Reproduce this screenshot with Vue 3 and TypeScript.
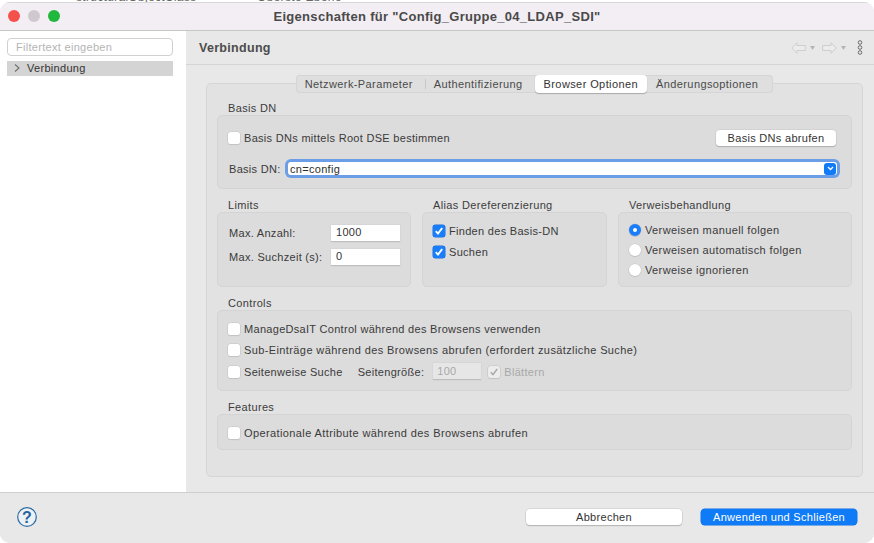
<script setup lang="ts">
import { ref } from 'vue'

const tabs = ['Netzwerk-Parameter', 'Authentifizierung', 'Browser Optionen', 'Änderungsoptionen']
const activeTab = ref('Browser Optionen')

const referrals = ['Verweisen manuell folgen', 'Verweisen automatisch folgen', 'Verweise ignorieren']
const referral = ref(referrals[0])
</script>

<template>
  <div class="screen">
    <div class="behind"><span class="behind-a">structuralObjectClass</span><span class="behind-b">Oberste Ebene</span></div>
    <div class="window">
      <header class="titlebar">
        <div class="lights">
          <span class="light red"></span>
          <span class="light grey"></span>
          <span class="light green"></span>
        </div>
        <div class="title">Eigenschaften für "Config_Gruppe_04_LDAP_SDI"</div>
      </header>

      <div class="main">
        <aside class="sidebar">
          <input class="filter" placeholder="Filtertext eingeben" />
          <div class="tree-row">
            <svg class="chevron" width="8" height="10" viewBox="0 0 8 10"><path d="M2 1.5 L6 5 L2 8.5" fill="none" stroke="#6f6f6f" stroke-width="1.1" /></svg>
            <span>Verbindung</span>
          </div>
        </aside>

        <section class="content">
          <div class="content-head">
            <h1>Verbindung</h1>
            <div class="nav">
              <svg width="15" height="12" viewBox="0 0 15 12"><path d="M6 0.700 L0.800 6 L6 11.300 V8.500 H14.300 V3.500 H6 Z" fill="#ececec" stroke="#cdcdcd" /></svg>
              <svg width="5" height="4" viewBox="0 0 5 4" class="caret"><path d="M0 0 H5 L2.500 4 Z" fill="#b5b5b5" /></svg>
              <svg width="15" height="12" viewBox="0 0 15 12" class="next"><path d="M9 0.700 L14.200 6 L9 11.300 V8.500 H0.700 V3.500 H9 Z" fill="#ececec" stroke="#cdcdcd" /></svg>
              <svg width="5" height="4" viewBox="0 0 5 4" class="caret"><path d="M0 0 H5 L2.500 4 Z" fill="#b5b5b5" /></svg>
              <svg width="6" height="15" viewBox="0 0 6 15" class="more">
                <circle cx="3" cy="2.500" r="1.800" fill="none" stroke="#6a6a6a" />
                <circle cx="3" cy="7.500" r="1.800" fill="none" stroke="#6a6a6a" />
                <circle cx="3" cy="12.500" r="1.800" fill="none" stroke="#6a6a6a" />
              </svg>
            </div>
          </div>

          <div class="tab-area">
            <div class="tabs">
              <div
                v-for="(tab, i) in tabs"
                :key="tab"
                :class="['tab', { active: activeTab === tab, sep: i === 0 }]"
              >{{ tab }}</div>
            </div>

            <div class="folder">
              <div class="group-label first">Basis DN</div>
              <div class="panel basis">
                <div class="row between">
                  <label class="check"><span class="box"></span>Basis DNs mittels Root DSE bestimmen</label>
                  <button class="btn fetch">Basis DNs abrufen</button>
                </div>
                <div class="row dn-row">
                  <span class="dn-label">Basis DN:</span>
                  <div class="combo">
                    <span>cn=config</span>
                    <span class="combo-btn">
                      <svg width="7" height="5" viewBox="0 0 7 5"><path d="M1 1 L3.500 3.500 L6 1" fill="none" stroke="#fff" stroke-width="1.400" /></svg>
                    </span>
                  </div>
                </div>
              </div>

              <div class="columns">
                <div class="col limits">
                  <div class="group-label">Limits</div>
                  <div class="panel tall">
                    <div class="field">
                      <span>Max. Anzahl:</span>
                      <div class="num">1000</div>
                    </div>
                    <div class="field">
                      <span>Max. Suchzeit (s):</span>
                      <div class="num">0</div>
                    </div>
                  </div>
                </div>
                <div class="col alias">
                  <div class="group-label">Alias Dereferenzierung</div>
                  <div class="panel tall">
                    <label class="check line">
                      <span class="box on"><svg width="10" height="10" viewBox="0 0 10 10"><path d="M1.800 5.200 L4 7.600 L8.200 2" fill="none" stroke="#fff" stroke-width="1.900" /></svg></span>Finden des Basis-DN
                    </label>
                    <label class="check line">
                      <span class="box on"><svg width="10" height="10" viewBox="0 0 10 10"><path d="M1.800 5.200 L4 7.600 L8.200 2" fill="none" stroke="#fff" stroke-width="1.900" /></svg></span>Suchen
                    </label>
                  </div>
                </div>
                <div class="col refs">
                  <div class="group-label">Verweisbehandlung</div>
                  <div class="panel tall radios">
                    <label v-for="r in referrals" :key="r" class="check radio-line">
                      <span :class="['radio', { on: referral === r }]"></span>{{ r }}
                    </label>
                  </div>
                </div>
              </div>

              <div class="group-label">Controls</div>
              <div class="panel controls">
                <label class="check line"><span class="box"></span>ManageDsaIT Control während des Browsens verwenden</label>
                <label class="check line wide"><span class="box"></span>Sub-Einträge während des Browsens abrufen (erfordert zusätzliche Suche)</label>
                <div class="paging">
                  <label class="check"><span class="box"></span>Seitenweise Suche</label>
                  <span class="page-size">Seitengröße:</span>
                  <div class="num disabled">100</div>
                  <label class="check muted">
                    <span class="box dim"><svg width="10" height="10" viewBox="0 0 10 10"><path d="M1.800 5.200 L4 7.600 L8.200 2" fill="none" stroke="#a9a9a9" stroke-width="1.500" /></svg></span>Blättern
                  </label>
                </div>
              </div>

              <div class="group-label">Features</div>
              <div class="panel features">
                <label class="check wide"><span class="box"></span>Operationale Attribute während des Browsens abrufen</label>
              </div>
            </div>
          </div>
        </section>
      </div>

      <footer class="footer">
        <svg class="help" width="20" height="20" viewBox="0 0 20 20">
          <circle cx="10" cy="10" r="9.300" fill="#eaf2f8" stroke="#2f6a9f" stroke-width="1.200" />
          <text x="10" y="15.500" text-anchor="middle" class="help-q">?</text>
        </svg>
        <div class="actions">
          <button class="btn cancel">Abbrechen</button>
          <button class="btn primary">Anwenden und Schließen</button>
        </div>
      </footer>
    </div>
  </div>
</template>

<style>
html, body {
  margin: 0;
  background: #fff;
}
</style>

<style scoped>
.screen {
  width: 874px;
  height: 543px;
  overflow: hidden;
  background: #fff;
  font-family: "Liberation Sans", Arial, sans-serif;
  font-size: 11px;
  letter-spacing: 0.3px;
  color: #3a3a3a;
  display: flex;
  flex-direction: column;
}
.behind {
  height: 2px;
  flex: none;
  overflow: hidden;
  position: relative;
  font-size: 12px;
  color: #666;
}
.behind-a {
  position: absolute;
  left: 76px;
  top: -10px;
}
.behind-b {
  position: absolute;
  left: 257px;
  top: -10px;
}
.window {
  flex: 1;
  min-height: 0;
  display: flex;
  flex-direction: column;
  border-radius: 10px;
  overflow: hidden;
  background: #e8e8e8;
}

/* title bar */
.titlebar {
  height: 28px;
  flex: none;
  background: #f3eef3;
  border-bottom: 1px solid #c6c6c6;
  box-shadow: inset 0 1px 0 #d8d8d8;
  display: flex;
  align-items: center;
}
.lights {
  display: flex;
  gap: 8px;
  padding-left: 8px;
}
.light {
  width: 12px;
  height: 12px;
  border-radius: 50%;
}
.red { background: #f4514c; }
.grey { background: #cfc9cf; }
.green { background: #1fb83c; }
.title {
  flex: 1;
  padding-right: 60px;
  text-align: center;
  font-weight: bold;
  font-size: 13px;
  letter-spacing: 0.3px;
  color: #4a4a4a;
}

/* sidebar */
.main {
  flex: 1;
  min-height: 0;
  display: flex;
}
.sidebar {
  width: 186px;
  flex: none;
  background: #fff;
  padding: 7px 13px 0 7px;
  box-sizing: border-box;
}
.filter {
  display: block;
  width: 166px;
  height: 18px;
  box-sizing: border-box;
  border: 1px solid #d0d0d0;
  border-radius: 4px;
  padding: 0 8px;
  font: inherit;
  letter-spacing: inherit;
  outline: none;
}
.filter::placeholder {
  color: #b4b4b4;
}
.tree-row {
  margin-top: 5px;
  height: 15px;
  box-sizing: border-box;
  padding-bottom: 1px;
  width: 166px;
  background: #d4d4d4;
  display: flex;
  align-items: center;
  color: #333;
}
.chevron {
  margin: 0 6px 0 6px;
}

/* content */
.content {
  flex: 1;
  min-width: 0;
  display: flex;
  flex-direction: column;
}
.content-head {
  height: 33px;
  flex: none;
  border-bottom: 1px solid #d5d5d5;
  display: flex;
  align-items: center;
  justify-content: space-between;
  padding: 0 11px 0 13px;
}
.content-head h1 {
  margin: 0;
  font-size: 12.500px;
  font-weight: bold;
  color: #4c4c4c;
}
.nav {
  display: flex;
  align-items: center;
}
.caret { margin-left: 4px; }
.next { margin-left: 7px; }
.more { margin-left: 11px; }

.tab-area {
  padding: 10px 11px 0 20px;
}
.tabs {
  display: flex;
  height: 18px;
  width: fit-content;
  margin: 0 auto;
  background: #dfdfdf;
  border-radius: 4px;
  box-shadow: inset 0 0 0 1px #d5d5d5;
  position: relative;
  z-index: 1;
  letter-spacing: 0.4px;
}
.tab {
  padding: 0 12px 0 9px;
  line-height: 18px;
  color: #4a4a4a;
}
.tab:last-child {
  padding-right: 15px;
}
.tab.sep {
  position: relative;
}
.tab.sep::after {
  content: "";
  position: absolute;
  right: -1px;
  top: 4px;
  height: 10px;
  width: 1px;
  background: #c8c8c8;
}
.tab.active {
  padding: 0 9px;
  background: #fff;
  border-radius: 4px;
  box-shadow: 0 1px 1px rgba(0, 0, 0, 0.25);
  color: #333;
}
.folder {
  margin-top: -10px;
  height: 394px;
  box-sizing: border-box;
  background: #e2e2e2;
  border: 1px solid #d6d6d6;
  border-radius: 5px;
  padding: 13px 10px 0 10px;
}
.group-label {
  color: #3c3c3c;
  line-height: 13px;
  height: 13px;
  margin: 10px 0 0 11px;
  letter-spacing: 0.35px;
}
.group-label.first {
  margin-top: 5px;
}
.panel {
  background: #dcdcdc;
  border: 1px solid #d4d4d4;
  border-radius: 5px;
  box-sizing: border-box;
}
.basis {
  height: 74px;
  padding: 12px 0 0 10px;
}
.row {
  display: flex;
  align-items: center;
}
.between {
  justify-content: space-between;
  height: 20px;
  margin-right: 15px;
}
.dn-row {
  margin-top: 14px;
}
.dn-label {
  width: 59px;
  margin-left: 1px;
}
.check {
  display: flex;
  align-items: center;
}
.wide {
  letter-spacing: 0.39px;
}
.box {
  width: 12px;
  height: 12px;
  flex: none;
  margin-right: 4px;
  background: #fff;
  border-radius: 2.500px;
  box-shadow: 0 0 0 0.5px #c4c4c4, 0 1px 1px rgba(0, 0, 0, 0.12);
  display: flex;
  align-items: center;
  justify-content: center;
}
.box.on {
  background: #1a7efb;
  box-shadow: 0 0 0 0.5px #1a6ed8;
}
.box.dim {
  background: #ececec;
}
.btn {
  font: inherit;
  letter-spacing: inherit;
  border: none;
  background: #fff;
  color: #333;
  border-radius: 4px;
  box-shadow: 0 0 0 0.5px #c8c8c8, 0 1px 1px rgba(0, 0, 0, 0.3);
  padding: 0;
}
.fetch {
  width: 120px;
  height: 16px;
}
.combo {
  width: 549px;
  height: 13px;
  background: #fff;
  border-radius: 3px;
  box-shadow: 0 0 0 3px #6c9ee8;
  display: flex;
  align-items: center;
  justify-content: space-between;
  padding: 0 0 0 2px;
  box-sizing: border-box;
  color: #2e2e2e;
}
.combo-btn {
  width: 12px;
  height: 12px;
  background: #0f7bf7;
  border-radius: 3px;
  margin-right: 1px;
  display: flex;
  align-items: center;
  justify-content: center;
}

.columns {
  display: flex;
  gap: 11px;
}
.limits { width: 194px; }
.alias { width: 185px; }
.refs { width: 234px; }
.tall {
  height: 75px;
}
.limits .panel {
  padding: 12px 10px 0 11px;
}
.field {
  display: flex;
  align-items: center;
  justify-content: space-between;
  height: 17px;
  margin-bottom: 7px;
}
.field > span {
  margin-top: -2px;
}
.num {
  width: 69px;
  height: 17px;
  box-sizing: border-box;
  background: #fff;
  border-bottom: 1px solid #bdbdbd;
  box-shadow: 0 0 0 0.5px #d0d0d0;
  padding-left: 5px;
  line-height: 15px;
  color: #333;
}
.num.disabled {
  width: 48px;
  background: #e6e6e6;
  color: #a9a9a9;
  margin-right: 7px;
  padding-left: 4px;
  line-height: 17px;
}
.alias .panel {
  padding: 11px 0 0 10px;
}
.line {
  height: 13px;
  margin-bottom: 8px;
}
.radios {
  padding: 10px 0 0 10px;
  letter-spacing: 0.38px;
}
.radio-line {
  height: 13px;
  margin-bottom: 7px;
}
.radio {
  width: 12px;
  height: 12px;
  flex: none;
  margin-right: 4px;
  box-sizing: border-box;
  border-radius: 50%;
  background: #fff;
  box-shadow: 0 0 0 0.5px #c4c4c4, 0 1px 1px rgba(0, 0, 0, 0.12);
}
.radio.on {
  background: #fff;
  border: 4px solid #1a7efb;
}
.controls {
  height: 81px;
  padding: 11px 0 0 10px;
}
.paging {
  display: flex;
  align-items: center;
  height: 17px;
  margin-top: -1px;
}
.page-size {
  margin: 0 9px 0 15px;
}
.muted {
  color: #a9a9a9;
}
.features {
  height: 36px;
  padding: 12px 0 0 10px;
}

/* footer */
.footer {
  height: 48px;
  flex: none;
  border-top: 1px solid #cfcfcf;
  background: #e8e8e8;
  display: flex;
  align-items: center;
  justify-content: space-between;
  padding: 0 17px 2px 17px;
}
.help-q {
  font-family: "Liberation Sans", Arial, sans-serif;
  font-size: 16px;
  font-weight: bold;
  fill: #2b6299;
}
.actions {
  display: flex;
  gap: 19px;
}
.cancel,
.primary {
  width: 156px;
  height: 16px;
}
.primary {
  background: #0f7bf7;
  color: #fff;
  box-shadow: 0 0 0 0.5px #0f6edd;
}
</style>
